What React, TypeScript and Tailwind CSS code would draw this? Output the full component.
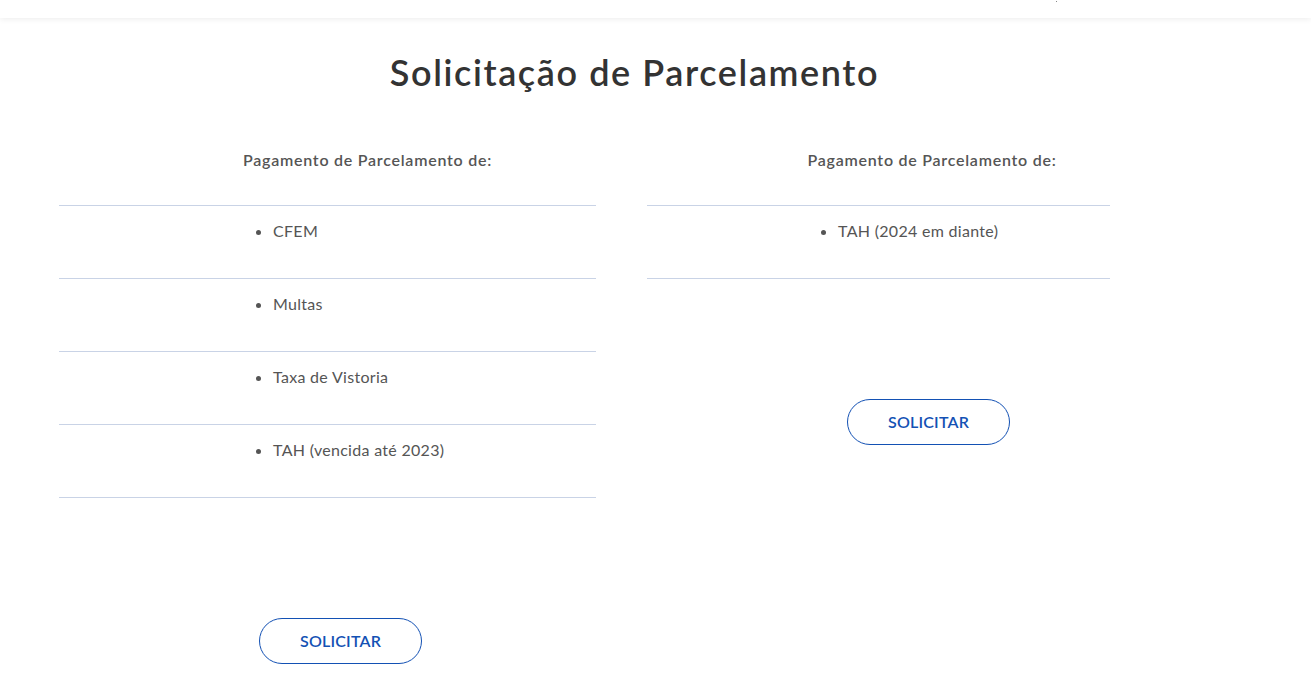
import React from "react";

const leftItems = ["CFEM", "Multas", "Taxa de Vistoria", "TAH (vencida até 2023)"];
const rightItems = ["TAH (2024 em diante)"];

function ItemRow({ label, listPad }: { label: string; listPad: string }) {
  return (
    <div className="h-[73px] border-b border-[#c9d3e6] pt-[15px]">
      <ul className={`list-disc ${listPad} text-[16px] leading-[20px] tracking-[0.3px] text-[#555555] marker:text-[#555555]`}>
        <li>{label}</li>
      </ul>
    </div>
  );
}

function SolicitarButton() {
  return (
    <button
      type="button"
      className="h-[46px] w-[163px] rounded-full border border-[#1351b4] bg-white text-[16px] font-semibold tracking-[0.2px] text-[#1351b4]"
    >
      SOLICITAR
    </button>
  );
}

export default function App() {
  return (
    <div
      className="min-h-[678px] bg-white"
      style={{ fontFamily: "Lato, 'Open Sans', sans-serif" }}
    >
      <div className="relative h-[18px] bg-white shadow-[0_1px_6px_rgba(0,0,0,0.08)]">
        <span className="absolute left-[1056px] top-[1px] h-[1px] w-[1px] bg-[#888]" />
      </div>

      <h1 className="mt-[34px] pr-[42px] text-center text-[36px] font-semibold leading-[40px] tracking-[1.6px] text-[#333333]">
        Solicitação de Parcelamento
      </h1>

      <div className="mt-[52px] flex pl-[59px]">
        <div className="w-[537px]">
          <div className="h-[61px] pl-[80px] pt-[6px] text-center text-[16px] font-semibold leading-[20px] tracking-[0.75px] text-[#555555]">
            Pagamento de Parcelamento de:
          </div>
          <div className="border-t border-[#c9d3e6]">
            {leftItems.map((item) => (
              <ItemRow key={item} label={item} listPad="pl-[214px]" />
            ))}
          </div>
          <div className="mt-[120px] pl-[200px]">
            <SolicitarButton />
          </div>
        </div>

        <div className="ml-[51px] w-[463px]">
          <div className="h-[61px] pl-[107px] pt-[6px] text-center text-[16px] font-semibold leading-[20px] tracking-[0.75px] text-[#555555]">
            Pagamento de Parcelamento de:
          </div>
          <div className="border-t border-[#c9d3e6]">
            {rightItems.map((item) => (
              <ItemRow key={item} label={item} listPad="pl-[191px]" />
            ))}
          </div>
          <div className="mt-[120px] pl-[200px]">
            <SolicitarButton />
          </div>
        </div>
      </div>
    </div>
  );
}
